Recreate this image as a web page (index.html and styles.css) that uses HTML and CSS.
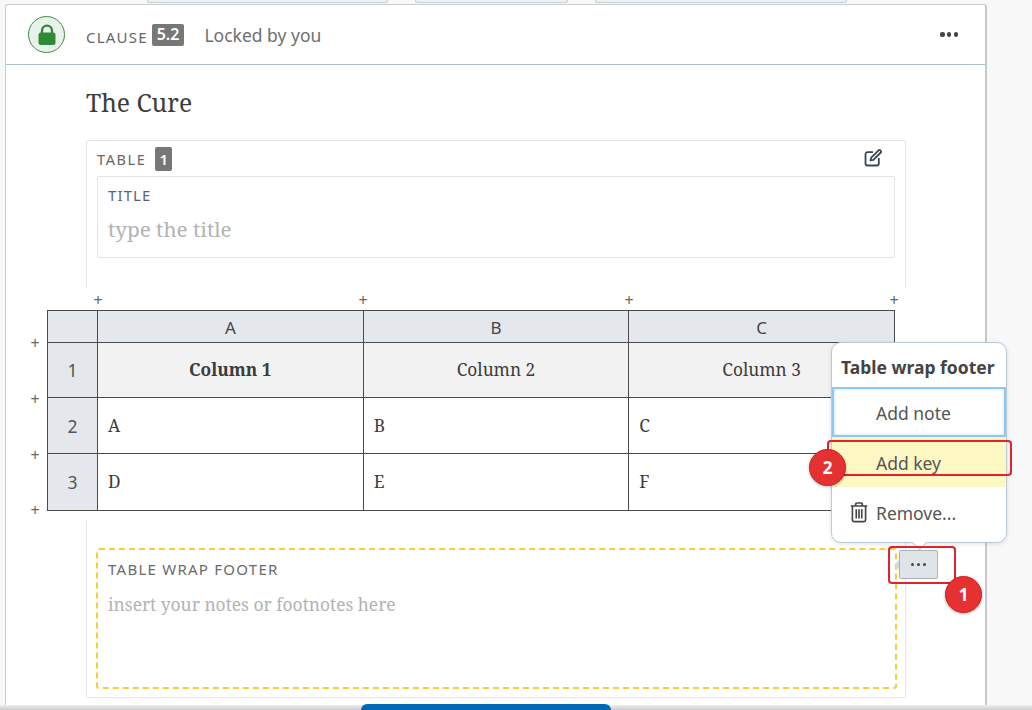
FILE: index.html
```html
<!DOCTYPE html>
<html lang="en">
<head>
<meta charset="utf-8">
<title>Clause 5.2</title>
<link rel="stylesheet" href="styles.css">
</head>
<body>
<div class="pills"><span class="pill p1"></span><span class="pill p2"></span><span class="pill p3"></span></div>
<main class="card">
  <header class="clause-head">
    <span class="lock">
      <svg viewBox="0 0 24 24" width="24" height="24"><path d="M7 10V7.600a5 5 0 0 1 10 0V10" fill="none" stroke="#2f8a36" stroke-width="2.400"/><rect x="3.500" y="9.500" width="17" height="12.500" rx="2.500" fill="#2f8a36"/></svg>
    </span>
    <span class="label clause-label">CLAUSE</span>
    <span class="num">5.2</span>
    <span class="locked">Locked by you</span>
    <span class="dots big"><i></i><i></i><i></i></span>
  </header>
  <section class="body">
    <h1 class="title">The Cure</h1>
    <div class="table-box">
      <div class="table-head">
        <span class="label small-label">TABLE</span>
        <span class="num num-small">1</span>
        <svg class="edit" viewBox="0 0 20 20" width="20" height="20"><path d="M10 4.200H4.500A2 2 0 0 0 2.500 6.200v9.300a2 2 0 0 0 2 2h9.300a2 2 0 0 0 2-2V10" fill="none" stroke="#3d4650" stroke-width="1.800"/><path d="M7.500 12.500l.7-2.900 7.400-7.300a1.200 1.200 0 0 1 1.700 0l.5.500a1.200 1.200 0 0 1 0 1.700l-7.400 7.300z" fill="none" stroke="#3d4650" stroke-width="1.800" stroke-linejoin="round"/></svg>
      </div>
      <div class="title-field">
        <div class="label field-label">TITLE</div>
        <div class="placeholder">type the title</div>
      </div>
    </div>
    <div class="grid-wrap">
      <span class="plus" data-p="t1">+</span><span class="plus" data-p="t2">+</span><span class="plus" data-p="t3">+</span><span class="plus" data-p="t4">+</span>
      <span class="plus" data-p="l1">+</span><span class="plus" data-p="l2">+</span><span class="plus" data-p="l3">+</span><span class="plus" data-p="l4">+</span>
      <table class="grid">
        <colgroup><col class="c0"><col class="c1"><col class="c1"><col class="c1"></colgroup>
        <tr class="r-head"><th class="rowh"></th><th class="colh">A</th><th class="colh">B</th><th class="colh">C</th></tr>
        <tr class="r1"><th class="rowh">1</th><td class="hcell strong">Column 1</td><td class="hcell">Column 2</td><td class="hcell">Column 3</td></tr>
        <tr class="r2"><th class="rowh">2</th><td>A</td><td>B</td><td>C</td></tr>
        <tr class="r3"><th class="rowh">3</th><td>D</td><td>E</td><td>F</td></tr>
      </table>
    </div>
    <div class="footer-box">
      <div class="footer-field">
        <div class="label footer-label">TABLE WRAP FOOTER</div>
        <div class="placeholder small">insert your notes or footnotes here</div>
        <button class="more" type="button"><span class="dots"><i></i><i></i><i></i></span></button>
      </div>
    </div>
  </section>
</main>
<div class="menu">
  <div class="menu-title">Table wrap footer</div>
  <div class="menu-item focus">Add note</div>
  <div class="menu-item key">Add key</div>
  <div class="menu-item">
    <svg class="trash" viewBox="0 0 18 20" width="20" height="22"><path d="M1.500 4.500h15M6 4.500V2.800a1 1 0 0 1 1-1h4a1 1 0 0 1 1 1v1.700M3 4.500v12.700a1.500 1.500 0 0 0 1.500 1.500h9a1.500 1.500 0 0 0 1.500-1.500V4.500M6.500 7.500v8.500M9 7.500v8.500M11.500 7.500v8.500" fill="none" stroke="#444" stroke-width="1.500"/></svg>
    Remove...
  </div>
</div>
<span class="callout-box b1"></span>
<span class="callout-box b2"></span>
<span class="badge n1">1</span>
<span class="badge n2">2</span>
<div class="bottom-shade"></div>
<div class="primary"></div>
</body>
</html>
```
FILE: styles.css
```css
* { box-sizing: border-box; }
html, body { margin: 0; height: 710px; overflow: hidden; }
body { position: relative; background: #f8f8f8; font-family: "Noto Sans", "Open Sans", sans-serif; color: #444; }
.pills { display: flex; height: 4px; padding-left: 147px; gap: 27px; }
.pill { display: block; height: 3px; border: 1px solid #c5d0d6; border-top: 0; border-radius: 0 0 8px 8px; background: #eef1f3; }
.p1 { width: 241px; }
.p2 { width: 153px; }
.p3 { width: 252px; }
.card { width: 982px; height: 720px; margin-left: 5px; background: #fff; border: 1px solid #ccc; border-right: 2px solid #c8c8c8; border-radius: 3px 3px 0 0; }
.clause-head { display: flex; align-items: center; height: 60px; padding-left: 22px; border-bottom: 1px solid #a9bcc8; }
.lock { display: flex; align-items: center; justify-content: center; width: 37px; height: 37px; border-radius: 50%; background: #e9f2ea; border: 1.500px solid #3a8f40; }
.label { color: #666; }
.clause-label { margin-left: 21px; margin-top: 4px; font-size: 15px; letter-spacing: 1.200px; }
.num { display: inline-block; margin-left: 4px; padding: 0 5px; height: 22px; line-height: 21px; border-radius: 2px; background: #777; color: #fff; font-size: 16px; font-weight: 600; }
.locked { margin-left: 20px; margin-top: 1px; font-size: 17.500px; color: #6e6e6e; }
.dots { display: flex; gap: 2.500px; }
.dots i { display: block; width: 3.500px; height: 3.500px; border-radius: 50%; background: #444; }
.big { margin-left: auto; margin-right: 27px; }
.big i { width: 4.200px; height: 4.200px; }
.body { padding: 0 79px 0 80px; }
.title { margin: 21px 0 20px; font-family: "Noto Serif", "DejaVu Serif", serif; font-weight: 400; font-size: 24.700px; line-height: 34px; color: #3c3c3c; }
.table-box { height: 148px; padding: 6px 10px 0; border: 1px solid #e4e4e4; border-bottom: 0; border-radius: 2px 2px 0 0; }
.table-head { display: flex; align-items: center; height: 24px; }
.small-label { font-size: 14.500px; letter-spacing: 1.600px; }
.num-small { margin-left: 9px; padding: 0 4px; height: 24px; line-height: 24px; font-size: 15px; }
.edit { margin-left: auto; margin-right: 12px; margin-top: -2px; }
.title-field { height: 82px; margin-top: 5px; padding: 9px 10px; border: 1px solid #e4e4e4; border-radius: 2px; }
.field-label { font-size: 15px; line-height: 19px; letter-spacing: 1.100px; color: #5a6478; }
.placeholder { margin-top: 10px; font-family: "Noto Serif", "DejaVu Serif", serif; font-size: 20.700px; line-height: 28px; color: #b3b3b3; }
.placeholder.small { margin-top: 13px; font-size: 17.400px; line-height: 24px; }
.grid-wrap { position: relative; width: 848px; margin: 22px 0 9px -39px; }
.grid { width: 847px; border-collapse: collapse; table-layout: fixed; font-family: "Noto Serif", "DejaVu Serif", serif; font-size: 17.300px; color: #3c3c3c; }
.c0 { width: 50px; }
.c1 { width: 265.670px; }
.grid th, .grid td { padding: 0 10px; border: 1px solid #4a4a4a; font-weight: 400; }
.grid .rowh { background: #e4e8ec; text-align: center; font-family: "Noto Sans", sans-serif; color: #555; font-size: 17.500px; }
.grid .colh { padding-top: 2px; background: #e4e8ec; text-align: center; font-family: "Noto Sans", sans-serif; color: #444; font-size: 17px; }
.r-head { height: 32px; }
.r1 { height: 55px; }
.r2 { height: 56px; }
.r3 { height: 57px; }
.grid .hcell { padding-bottom: 2px; background: #f2f2f2; text-align: center; }
.r3 td { padding-bottom: 2px; }
.grid .strong { font-weight: 700; }
.plus { position: absolute; font-size: 16px; line-height: 14px; width: 10px; text-align: center; color: #666; }
.plus[data-p^="t"] { top: -17px; }
.plus[data-p^="l"] { left: -17px; }
.plus[data-p="t1"] { left: 46px; }
.plus[data-p="t2"] { left: 311px; }
.plus[data-p="t3"] { left: 577px; }
.plus[data-p="t4"] { left: 842px; }
.plus[data-p="l1"] { top: 26px; }
.plus[data-p="l2"] { top: 82px; }
.plus[data-p="l3"] { top: 138px; }
.plus[data-p="l4"] { top: 193px; }
.footer-box { height: 178px; padding: 28px 9px 0; border: 1px solid #e4e4e4; border-top: 0; border-radius: 0 0 2px 2px; }
.footer-field { position: relative; width: 801px; height: 141px; padding: 9px 10px; border: 2px dashed #f5cf38; border-radius: 3px; }
.footer-label { font-size: 15px; line-height: 20px; letter-spacing: 1.250px; color: #6a6a6a; }
.more { position: absolute; right: -43px; top: 0; display: flex; align-items: center; justify-content: center; width: 39px; height: 29px; padding: 0; background: #dfe4e8; border: 1px solid #aab2b8; border-radius: 2px; }
.more::before { content: ""; position: absolute; left: -6px; top: 9px; border: 5px solid transparent; border-left: 0; border-right: 5px solid #d5dade; }
.menu { position: absolute; left: 831px; top: 342px; width: 176px; height: 201px; padding-top: 10px; background: #fff; border: 1px solid #bccad4; border-radius: 10px; box-shadow: 0 1px 4px rgba(0,0,0,.12); }
.menu::after { content: ""; position: absolute; left: 82px; bottom: -6px; width: 10px; height: 10px; background: #fff; transform: rotate(45deg); border-right: 1px solid #bccad4; border-bottom: 1px solid #bccad4; }
.menu-title { height: 34px; padding-left: 9px; font-size: 17.500px; font-weight: 700; line-height: 29px; color: #444; }
.menu-item { position: relative; display: flex; align-items: center; height: 50px; padding: 1px 0 0 44px; font-size: 17.500px; color: #555; }
.focus { border: 2px solid #8cc8f7; padding-left: 42px; box-shadow: inset 0 0 3px rgba(140,200,247,.6); }
.key { background: #fdf7c4; }
.trash { position: absolute; left: 17px; top: 14px; }
.callout-box { position: absolute; border: 2px solid #e0222a; border-radius: 4px; }
.b1 { left: 888px; top: 546px; width: 68px; height: 38px; }
.b2 { left: 827px; top: 440px; width: 185px; height: 36px; }
.badge { position: absolute; display: flex; align-items: center; justify-content: center; width: 37px; height: 37px; border-radius: 50%; background: #e53131; border: 1.500px solid #d02020; box-shadow: 0 1px 3px rgba(0,0,0,.3); color: #fff; font-size: 17px; font-weight: 700; }
.n1 { left: 945px; top: 576px; }
.n2 { left: 809px; top: 449px; }
.bottom-shade { position: absolute; left: 0; right: 0; bottom: 0; height: 5px; background: linear-gradient(#eee, #ccc); }
.primary { position: absolute; left: 361px; bottom: 0; width: 250px; height: 6px; background: #0069b4; border-radius: 8px 8px 0 0; }
```
